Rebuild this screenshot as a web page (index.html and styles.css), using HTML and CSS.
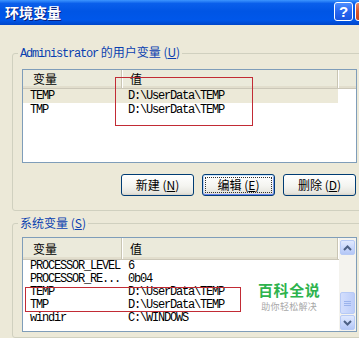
FILE: index.html
```html
<!DOCTYPE html>
<html lang="zh-CN">
<head>
<meta charset="utf-8">
<title>环境变量</title>
<link rel="stylesheet" href="styles.css">
</head>
<body>
<div class="window">
  <div class="titlebar">
    <span class="title">环境变量</span>
    <div class="controls">
      <span class="ctl help">?</span>
      <span class="ctl close"></span>
    </div>
  </div>
  <div class="client">
    <fieldset class="group group-user">
      <legend><span class="mono">Administrator</span> 的用户变量 (<u>U</u>)</legend>
      <div class="list list-user">
        <div class="header">
          <div class="hcol c1">变量</div>
          <div class="hcol c2">值</div>
          <div class="hcol rest"></div>
        </div>
        <div class="row sel"><span class="c1">TEMP</span><span class="c2">D:\UserData\TEMP</span></div>
        <div class="row"><span class="c1">TMP</span><span class="c2">D:\UserData\TEMP</span></div>
        <div class="mark mark-user"></div>
      </div>
      <div class="buttons">
        <button class="btn">新建 (<u>N</u>)</button>
        <button class="btn default"><span class="focus">编辑 (<u>E</u>)</span></button>
        <button class="btn">删除 (<u>D</u>)</button>
      </div>
    </fieldset>

    <fieldset class="group group-sys">
      <legend>系统变量 (<u>S</u>)</legend>
      <div class="list list-sys">
        <div class="list-body">
          <div class="header tall">
            <div class="hcol c1">变量</div>
            <div class="hcol c2">值</div>
            <div class="hcol rest"></div>
          </div>
          <div class="row short"><span class="c1">PROCESSOR_LEVEL</span><span class="c2">6</span></div>
          <div class="row short"><span class="c1">PROCESSOR_RE...</span><span class="c2">0b04</span></div>
          <div class="row short"><span class="c1">TEMP</span><span class="c2">D:\UserData\TEMP</span></div>
          <div class="row short"><span class="c1">TMP</span><span class="c2">D:\UserData\TEMP</span></div>
          <div class="row short"><span class="c1">windir</span><span class="c2">C:\WINDOWS</span></div>
        </div>
        <div class="scrollbar">
          <div class="sb-btn up"><svg width="9" height="6" viewBox="0 0 9 6"><path d="M1 5 L4.5 1.5 L8 5" fill="none" stroke="#4D6185" stroke-width="2"/></svg></div>
          <div class="sb-track"><div class="sb-thumb"><svg width="7" height="7" viewBox="0 0 7 7"><path d="M0 1.5H7M0 3.5H7M0 5.5H7" stroke="#9BB3EC" stroke-width="1"/></svg></div></div>
          <div class="sb-btn down"><svg width="9" height="6" viewBox="0 0 9 6"><path d="M1 1 L4.5 4.5 L8 1" fill="none" stroke="#4D6185" stroke-width="2"/></svg></div>
        </div>
        <div class="mark mark-sys"></div>
        <div class="watermark">
          <div class="wm-main">百科全说</div>
          <div class="wm-sub">助你轻松解决</div>
        </div>
      </div>
    </fieldset>
  </div>
</div>
</body>
</html>
```

FILE: styles.css
```css
* { box-sizing: border-box; }

html, body {
  margin: 0;
  padding: 0;
  width: 359px;
  height: 338px;
  overflow: hidden;
  background: #ECE9D8;
}

body {
  font-family: "Noto Sans CJK SC", "Liberation Sans", sans-serif;
  font-size: 12px;
  color: #000;
}

.window {
  width: 359px;
  height: 338px;
  overflow: hidden;
}

/* Title bar */
.titlebar {
  height: 25px;
  display: flex;
  align-items: flex-start;
  background: linear-gradient(to bottom, #3D95FF 0%, #0A5FEB 14%, #0055E5 45%, #0057EA 80%, #0046C9 100%);
}

.title {
  flex: 1;
  padding: 3px 0 0 5px;
  font-family: "Noto Sans CJK SC", sans-serif;
  font-weight: 700;
  font-size: 14px;
  line-height: 18px;
  color: #fff;
  text-shadow: 1px 1px 0 #0A1E7A;
}

.controls {
  display: flex;
  gap: 2px;
  padding-top: 2px;
  margin-right: -17px;
}

.ctl {
  width: 19px;
  height: 19px;
  border: 1px solid #fff;
  border-radius: 3px;
  display: flex;
  align-items: center;
  justify-content: center;
}

.help {
  background: linear-gradient(to bottom, #4D8EFF 0%, #2867F0 50%, #1A55E0 100%);
  color: #fff;
  font-family: "Liberation Sans", sans-serif;
  font-weight: 700;
  font-size: 15px;
  line-height: 1;
}

.close {
  width: 21px;
  background: linear-gradient(to bottom, #E88A6A 0%, #D8562D 50%, #C9431C 100%);
}

/* Client area */
.client {
  padding-left: 12px;
}

.group {
  margin: 0 -9px 0 0;
  border: 1px solid #D0D0BF;
  border-radius: 3px;
  padding: 0 10px 14px 9px;
  min-width: 0;
}

.group legend {
  padding: 0 2px;
  margin-left: -4px;
  line-height: 14px;
  font-size: 12px;
  color: #0A3FB0;
  white-space: nowrap;
}

.group-user { margin-top: 20px; }
.group-sys { margin-top: 5px; padding-bottom: 5px; }

.mono {
  font-family: "Liberation Mono", monospace;
  font-size: 12px;
  letter-spacing: -1.2px;
}

u { text-decoration: underline; }

/* List views */
.list {
  position: relative;
  background: #fff;
  border: 1px solid #7F9DB9;
  overflow: hidden;
}

.list-user {
  margin-top: 8px;
  height: 94px;
}

.list-sys {
  margin-top: 7px;
  height: 95px;
  display: flex;
}

.list-body {
  flex: 1;
  min-width: 0;
}

.header {
  display: flex;
  height: 19px;
  background: #EBEADB;
  border-bottom: 1px solid #CBC7B8;
  box-shadow: inset 0 -2px 0 #E2DECD;
}

.header.tall { height: 22px; }

.hcol {
  display: flex;
  align-items: center;
  font-size: 12px;
  line-height: 14px;
  border-right: 1px solid #C9C5B3;
  box-shadow: 1px 0 0 #fff;
}

.hcol.c1 { width: 99px; padding-left: 10px; }
.hcol.c2 { width: 216px; padding-left: 8px; }
.hcol.rest { flex: 1; border-right: none; box-shadow: none; }

.row {
  display: flex;
  width: 315px;
  height: 14px;
  align-items: center;
  font-family: "Liberation Mono", monospace;
  font-size: 12px;
  letter-spacing: -1.2px;
  line-height: 13px;
  white-space: nowrap;
}

.row.short { height: 13px; }

.row.sel { background: #ECE9D8; }

.row .c1 { width: 99px; padding-left: 7px; }
.row .c2 { padding-left: 6px; }

/* Red annotation boxes */
.mark {
  position: absolute;
  border: 1px solid #C22B35;
  pointer-events: none;
}

.mark-user { left: 92px; top: 7px; width: 138px; height: 49px; }
.mark-sys { left: 2px; top: 49px; width: 216px; height: 25px; }

/* Scrollbar */
.scrollbar {
  width: 17px;
  display: flex;
  flex-direction: column;
  background: #F4F3EE;
  padding: 2px 1px 1px 1px;
}

.sb-btn {
  height: 15px;
  border: 1px solid #B7CAF5;
  border-radius: 2px;
  background: linear-gradient(to bottom, #E0E9FE 0%, #C6D5FB 60%, #B4C7F6 100%);
  display: flex;
  align-items: center;
  justify-content: center;
}

.sb-track {
  flex: 1;
  display: flex;
  flex-direction: column;
  justify-content: flex-end;
  padding: 1px 0 1px;
}

.sb-thumb {
  height: 22px;
  border: 1px solid #B7CAF5;
  border-radius: 2px;
  background: linear-gradient(to right, #D3DEFC 0%, #C8D6FB 50%, #BDCDF8 100%);
  display: flex;
  align-items: center;
  justify-content: center;
}

/* Watermark */
.watermark {
  position: absolute;
  left: 235px;
  top: 44px;
  text-align: center;
  pointer-events: none;
}

.wm-main {
  font-family: "Noto Sans CJK SC", sans-serif;
  font-weight: 700;
  font-size: 15px;
  line-height: 15px;
  color: #2DB34D;
  letter-spacing: 0.6px;
}

.wm-sub {
  margin-top: 5px;
  font-size: 9px;
  line-height: 10px;
  color: #A8A8A8;
  letter-spacing: 0.3px;
}

/* Buttons */
.buttons {
  display: flex;
  justify-content: flex-end;
  gap: 8px;
  margin-top: 11px;
  padding-right: 1px;
}

.btn {
  width: 73px;
  height: 22px;
  margin: 0;
  padding: 0;
  border: 1px solid #003C74;
  border-radius: 3px;
  background: linear-gradient(to bottom, #FFFFFF 0%, #F4F4F0 55%, #E6E5DE 90%, #D6D0C5 100%);
  font-family: "Noto Sans CJK SC", sans-serif;
  font-size: 12px;
  line-height: 14px;
  color: #000;
  display: flex;
  align-items: center;
  justify-content: center;
}

.btn.default {
  box-shadow: inset 0 1px 0 #CEE7FF, inset 0 -1px 0 #6982EE, inset 1px 0 0 #B9D1FA, inset -1px 0 0 #7C99E8;
  padding: 2px;
}

.btn .focus {
  flex: 1;
  align-self: stretch;
  display: flex;
  align-items: center;
  justify-content: center;
  outline: 1px dotted #333;
  outline-offset: -1px;
}
```
